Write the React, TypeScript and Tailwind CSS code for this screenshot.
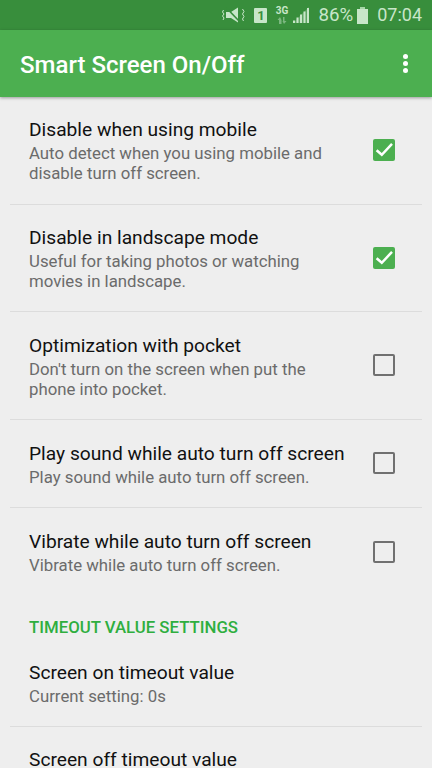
import React from 'react';

const rows = [
  { title: 'Disable when using mobile', sub: ['Auto detect when you using mobile and', 'disable turn off screen.'], checked: true },
  { title: 'Disable in landscape mode', sub: ['Useful for taking photos or watching', 'movies in landscape.'], checked: true },
  { title: 'Optimization with pocket', sub: ["Don't turn on the screen when put the", 'phone into pocket.'], checked: false },
  { title: 'Play sound while auto turn off screen', sub: ['Play sound while auto turn off screen.'], checked: false },
  { title: 'Vibrate while auto turn off screen', sub: ['Vibrate while auto turn off screen.'], checked: false },
];

const Checkbox: React.FC<{ checked: boolean }> = ({ checked }) =>
  checked ? (
    <div className="w-[22px] h-[22px] rounded-[2px] bg-[#4caf50]">
      <svg width="22" height="22" viewBox="0 0 22 22" fill="none">
        <path d="M3.6 11.2 L8.8 15.8 L19 4.9" stroke="#fff" strokeWidth="2.5" />
      </svg>
    </div>
  ) : (
    <div className="w-[22px] h-[22px] rounded-[2px] border-2 border-[#707070]" />
  );

const StatusBar = () => (
  <div className="h-[30px] bg-[#388e3c] flex items-center justify-end pr-[10px] text-[#c8e6c9] text-[18px] leading-none">
    <svg width="23" height="16" viewBox="0 0 23 16" fill="#c8e6c9" className="mr-[9px]">
      <path d="M4 5 L9 5 L16 0.5 L16 15.5 L9 11 L4 11 Z" />
      <path d="M4 0.5 L18 15" stroke="#388e3c" strokeWidth="1.6" fill="none" />
      <path d="M1.5 3 L0.5 5 L2 7 L0.5 9 L2 11 L1 13 M20.5 2 L22 4.5 L20.5 7 L22 9.5 L20.5 12 L21.5 14" stroke="#c8e6c9" fill="none" strokeWidth="1" />
    </svg>
    <div className="w-[13px] h-[15px] bg-[#c8e6c9] rounded-[1px] flex items-center justify-center text-[#388e3c] text-[13px] font-bold mr-[8px]">1</div>
    <div className="w-[13px] flex flex-col items-center mr-[5px]">
      <span className="text-[10px] font-bold leading-[10px]">3G</span>
      <svg width="10" height="7" viewBox="0 0 10 7" fill="#7cb780" className="mt-[1px]">
        <path d="M2 7 V3 H0.5 L3 0 L4.5 3 V7 Z M6 0 H7.5 V4 H9.5 L7 7 L5.5 4 H6 Z" />
      </svg>
    </div>
    <svg width="16" height="16" viewBox="0 0 16 16" className="mr-[9px]">
      <path d="M0 16 L16 0 L16 16 Z" fill="#5fa463" />
      <path d="M0 13.5 H2 V16 H0 Z M3.5 10.5 H5.5 V16 H3.5 Z M7 7.5 H9 V16 H7 Z M10.5 4.5 H12.5 V16 H10.5 Z M14 1 H16 V16 H14 Z" fill="#c8e6c9" />
    </svg>
    <span className="text-[18.7px]">86%</span>
    <div className="ml-[4px] mr-[9px] flex flex-col items-center">
      <div className="w-[5px] h-[2px] bg-[#a5d6a7]" />
      <div className="w-[11px] h-[15px] bg-[#c8e6c9]" />
    </div>
    <span>07:04</span>
  </div>
);

export default function App() {
  return (
    <div className="w-[432px] h-[768px] overflow-hidden bg-[#eeeeee] font-['Roboto',sans-serif]">
      <StatusBar />
      <div className="relative h-[67px] bg-[#4caf50] flex items-center justify-between pl-[20px] pr-[24px] shadow-[0_1px_3px_rgba(0,0,0,0.35)]">
        <span className="text-white text-[24px] font-medium pt-[3px]">Smart Screen On/Off</span>
        <div className="flex flex-col gap-[2px]">
          <div className="w-[5px] h-[5px] rounded-full bg-white" />
          <div className="w-[5px] h-[5px] rounded-full bg-white" />
          <div className="w-[5px] h-[5px] rounded-full bg-white" />
        </div>
      </div>
      <div className="px-[10px]">
        {rows.map((r, i) => (
          <div
            key={r.title}
            className={`flex items-center justify-between pl-[19px] pr-[27px] ${r.sub.length === 2 ? 'h-[107.5px]' : 'h-[88px]'} ${i < rows.length - 1 ? 'border-b border-[#dcdcdc]' : ''}`}
          >
            <div className={i === 0 ? '' : 'pt-[1px]'}>
              <div className="text-[19.2px] leading-[26px] text-[#111111]">{r.title}</div>
              <div className="text-[16.8px] leading-[20px] text-[#6b6b6b]">
                {r.sub.map((s) => (
                  <div key={s}>{s}</div>
                ))}
              </div>
            </div>
            <Checkbox checked={r.checked} />
          </div>
        ))}
        <div className="pl-[19px] h-[45px] flex items-end pb-[4px] text-[16.8px] leading-[20px] font-medium text-[#2fae3f]">TIMEOUT VALUE SETTINGS</div>
        <div className="pl-[19px] h-[86px] border-b border-[#dcdcdc] flex flex-col justify-center">
          <div className="text-[19.2px] leading-[26px] text-[#111111]">Screen on timeout value</div>
          <div className="text-[16.8px] leading-[20px] text-[#6b6b6b]">Current setting: 0s</div>
        </div>
        <div className="pl-[19px] pt-[20px]">
          <div className="text-[19.2px] leading-[26px] text-[#111111]">Screen off timeout value</div>
        </div>
      </div>
    </div>
  );
}
